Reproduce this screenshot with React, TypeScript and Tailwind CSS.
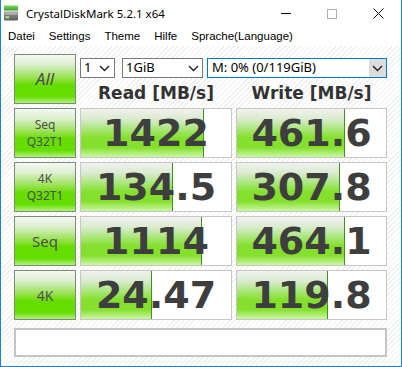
import React from "react";

function Chevron() {
  return (
    <svg width="11" height="7" viewBox="0 0 11 7">
      <polyline points="1,1 5.5,5.5 10,1" fill="none" stroke="#1e1e1e" strokeWidth="1.4" />
    </svg>
  );
}

function AppIcon() {
  return (
    <svg width="16" height="16" viewBox="0 0 16 16">
      <defs>
        <linearGradient id="gtop" x1="0" y1="0" x2="0" y2="1">
          <stop offset="0" stopColor="#7fe05a" />
          <stop offset="1" stopColor="#2c9e2a" />
        </linearGradient>
        <linearGradient id="gbody" x1="0" y1="0" x2="0" y2="1">
          <stop offset="0" stopColor="#9a9a9a" />
          <stop offset="1" stopColor="#5c5c5c" />
        </linearGradient>
      </defs>
      <rect x="1" y="0.5" width="14" height="5" fill="url(#gtop)" />
      <rect x="1" y="6.5" width="14" height="9" rx="1" fill="url(#gbody)" />
      <rect x="2" y="7.5" width="12" height="2" fill="#b8b8b8" />
      <rect x="2.5" y="11" width="3.5" height="2.5" fill="#9fe07a" />
    </svg>
  );
}

type Row = {
  label: string[];
  labelSize: string;
  read: string;
  rw: number;
  write: string;
  ww: number;
};

const rows: Row[] = [
  { label: ["Seq", "Q32T1"], labelSize: "text-[12px]", read: "1422", rw: 123, write: "461.6", ww: 108 },
  { label: ["4K", "Q32T1"], labelSize: "text-[12px]", read: "134.5", rw: 92, write: "307.8", ww: 103 },
  { label: ["Seq"], labelSize: "text-[15px]", read: "1114", rw: 121, write: "464.1", ww: 108 },
  { label: ["4K"], labelSize: "text-[14px]", read: "24.47", rw: 71, write: "119.8", ww: 91 },
];

function LabelButton({ children, className = "" }: { children: React.ReactNode; className?: string }) {
  return (
    <div
      className={
        "h-[50px] flex flex-col items-center justify-center border border-[#7c8c7a] text-[#4e4e4e] font-['Noto_Sans',sans-serif] bg-[linear-gradient(to_bottom,#f6f8f4_0%,#dcefd0_20%,#a2e462_44%,#66dd00_62%,#66dd00_86%,#b0f27e_100%)] " +
        className
      }
    >
      {children}
    </div>
  );
}

function ValueBox({ value, fill }: { value: string; fill: number }) {
  return (
    <div className="relative h-[50px] border border-[#c6c6c6] bg-white flex items-center justify-center">
      <div
        className="absolute left-0 top-0 bottom-0 border-r border-[#3f8f22] bg-[linear-gradient(to_bottom,#f0f2ee_0%,#dcebd2_20%,#a9e67a_42%,#84e02c_60%,#84e02c_80%,#cdf6a6_100%)]"
        style={{ width: fill }}
      />
      <span className="relative text-[38px] leading-[38px] font-bold text-[#3e3e3e] font-['DejaVu_Sans',sans-serif]">
        {value}
      </span>
    </div>
  );
}

export default function App() {
  return (
    <div className="w-[402px] h-[367px] bg-white border-x border-b border-[#1883d7] flex flex-col font-['Noto_Sans',sans-serif] overflow-hidden">
      {/* Title bar */}
      <div className="h-[27px] flex items-center shrink-0">
        <div className="ml-[2px] mt-[-1px]">
          <AppIcon />
        </div>
        <span className="ml-[7px] text-[11.5px] text-black">CrystalDiskMark 5.2.1 x64</span>
        <div className="ml-auto flex h-full">
          <div className="w-[46px] flex items-center justify-center">
            <div className="w-[10px] h-px bg-black" />
          </div>
          <div className="w-[46px] flex items-center justify-center">
            <div className="w-[10px] h-[10px] border border-[#b0b0b0]" />
          </div>
          <div className="w-[46px] flex items-center justify-center">
            <svg width="11" height="11" viewBox="0 0 11 11">
              <path d="M0.5 0.5 L10.5 10.5 M10.5 0.5 L0.5 10.5" stroke="#111" strokeWidth="1" />
            </svg>
          </div>
        </div>
      </div>
      {/* Menu bar */}
      <div className="h-[19px] flex items-center text-[11.5px] text-black shrink-0 font-['Liberation_Sans',sans-serif]">
        <span className="px-[7px]">Datei</span>
        <span className="px-[7px]">Settings</span>
        <span className="px-[7px]">Theme</span>
        <span className="px-[7px]">Hilfe</span>
        <span className="px-[7px]">Sprache(Language)</span>
      </div>
      {/* Client */}
      <div className="flex-1 pl-[13px] pr-[14px] pt-[8px] bg-[repeating-linear-gradient(135deg,#ffffff_0px,#ffffff_2.6px,#efefef_2.6px,#efefef_3.6px)]">
        <div className="grid grid-cols-[62px_152px_151px] gap-[4px]">
          <LabelButton className="text-[17px]">
            <span className="italic">All</span>
          </LabelButton>
          <div className="col-span-2 flex flex-col">
            <div className="flex mt-[4px] h-[20px] text-[13px] text-black">
              <div className="w-[35px] h-[20px] bg-white border border-[#7a7a7a] flex items-center pl-[3px] pr-[4px] justify-between">
                <span>1</span>
                <Chevron />
              </div>
              <div className="w-[81px] ml-[7px] h-[20px] bg-white border border-[#7a7a7a] flex items-center pl-[3px] pr-[3px] justify-between">
                <span>1GiB</span>
                <Chevron />
              </div>
              <div className="w-[180px] ml-[4px] h-[20px] bg-white border border-[#0078d7] flex items-center">
                <span className="pl-[4px]">M: 0% (0/119GiB)</span>
                <div className="ml-auto w-[17px] h-full bg-[#dcdcdc] flex items-center justify-center">
                  <Chevron />
                </div>
              </div>
            </div>
            <div className="grid grid-cols-[152px_151px] gap-[4px] mt-[5px] text-[17px] leading-[20px] font-bold text-[#333333] font-['DejaVu_Sans',sans-serif] text-center">
              <div>Read [MB/s]</div>
              <div>Write [MB/s]</div>
            </div>
          </div>
          {rows.map((r, i) => (
            <React.Fragment key={i}>
              <LabelButton className={r.labelSize + " leading-[17px]"}>
                {r.label.map((l, j) => (
                  <span key={j}>{l}</span>
                ))}
              </LabelButton>
              <ValueBox value={r.read} fill={r.rw} />
              <ValueBox value={r.write} fill={r.ww} />
            </React.Fragment>
          ))}
        </div>
        <div className="mt-[8px] w-[373px] h-[29px] bg-white border-2 border-[#c4c4c4]" />
      </div>
    </div>
  );
}
